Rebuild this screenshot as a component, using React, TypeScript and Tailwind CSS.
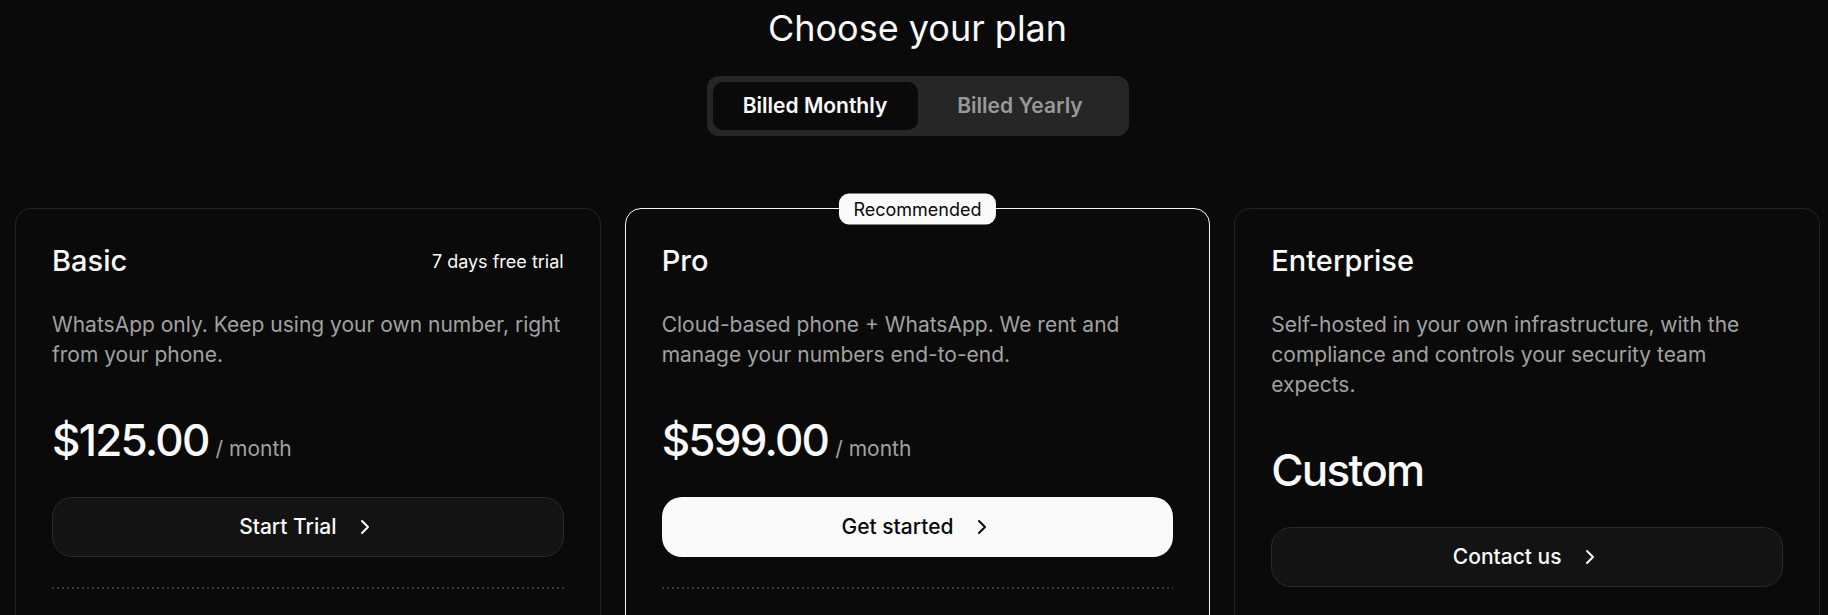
import { ChevronRight } from 'lucide-react'

type Plan = {
  name: string
  note?: string
  description: string
  price?: string
  cta: string
  highlighted?: boolean
}

const plans: Plan[] = [
  {
    name: 'Basic',
    note: '7 days free trial',
    description: 'WhatsApp only. Keep using your own number, right from your phone.',
    price: '$125.00',
    cta: 'Start Trial',
  },
  {
    name: 'Pro',
    description: 'Cloud-based phone + WhatsApp. We rent and manage your numbers end-to-end.',
    price: '$599.00',
    cta: 'Get started',
    highlighted: true,
  },
  {
    name: 'Enterprise',
    description:
      'Self-hosted in your own infrastructure, with the compliance and controls your security team expects.',
    cta: 'Contact us',
  },
]

function PlanCard({ plan }: { plan: Plan }) {
  return (
    <div
      className={
        'relative rounded-[16px] border bg-[#0a0a0a] px-9 pt-[34px] pb-[160px] ' +
        (plan.highlighted ? 'border-[#f5f5f5]' : 'border-[#232323]')
      }
    >
      {plan.highlighted && (
        <div className="absolute left-1/2 top-0 flex h-[31px] -translate-x-1/2 -translate-y-1/2 items-center rounded-[10px] bg-[#fafafa] px-[14px] text-[18px] text-[#0a0a0a]">
          Recommended
        </div>
      )}

      <div className="flex items-center justify-between">
        <h3 className="text-[29px] leading-[36px] font-medium text-[#fafafa]">{plan.name}</h3>
        {plan.note && <span className="text-[18px] text-[#fafafa]">{plan.note}</span>}
      </div>

      <p className="mt-[31px] text-[21px] leading-[30px] text-[#a1a1a1]">{plan.description}</p>

      <div className="mt-12 flex items-baseline gap-[7px]">
        <span className="text-[44px] leading-none font-medium tracking-[-0.04em] text-[#fafafa]">
          {plan.price ?? 'Custom'}
        </span>
        {plan.price && <span className="text-[21px] leading-none text-[#a1a1a1]">/ month</span>}
      </div>

      <button
        className={
          'mt-[35px] flex h-[60px] w-full items-center justify-center gap-4 rounded-[20px] text-[21px] font-medium ' +
          (plan.highlighted
            ? 'bg-[#fafafa] text-[#0a0a0a]'
            : 'border border-[#2a2a2a] bg-[#131313] text-[#fafafa]')
        }
      >
        <span>{plan.cta}</span>
        <ChevronRight className="h-6 w-6" strokeWidth={2} />
      </button>

      <div className="mt-[30px] h-[2px] w-full bg-[repeating-linear-gradient(to_right,#3a3a3a_0_2px,transparent_2px_5px)]" />
    </div>
  )
}

export default function App() {
  return (
    <div className="min-h-screen bg-[#0a0a0a] font-[family-name:Inter,sans-serif]">
      <div className="ml-[15px] flex w-[1805px] flex-col items-center pt-2">
        <h1 className="text-[36px] leading-[40px] text-[#fafafa]">Choose your plan</h1>

        <div className="mt-[28px] flex rounded-[12px] bg-[#262626] p-[6px]">
          <button className="h-12 w-[205px] rounded-[10px] bg-[#0a0a0a] text-[21px] font-semibold text-[#fafafa]">
            Billed Monthly
          </button>
          <button className="h-12 w-[205px] rounded-[10px] text-[21px] font-semibold text-[#999999]">
            Billed Yearly
          </button>
        </div>

        <div className="mt-[72px] grid w-full grid-cols-3 gap-6">
          {plans.map((plan) => (
            <PlanCard key={plan.name} plan={plan} />
          ))}
        </div>
      </div>
    </div>
  )
}
